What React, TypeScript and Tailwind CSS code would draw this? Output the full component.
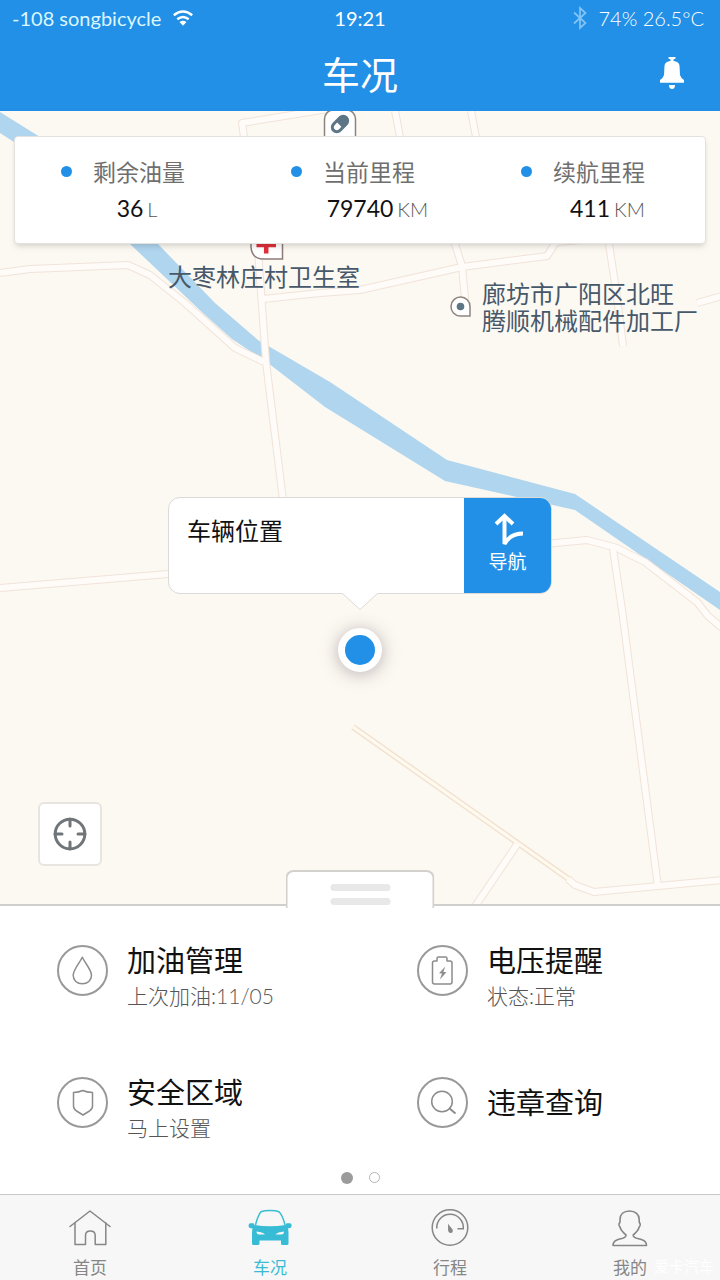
import React, { useState } from 'react';

const roads = [
    'M0 273 L30 269 L128 265 L150 275 L185 303 L235 348 L264 362',
    'M340 107 L242 123 L244 137 L258 250 L266 362 L283 500',
    'M263 299 L320 293 L360 290 L462 267 L547 256 L556 242 L610 238',
    'M395 111 L400 137 L455 244 L462 266 L466 310',
    'M471 111 L476 137 M609 244 L616 290 L623 346',
    'M697 303 L722 296',
    'M0 588 L180 573',
    'M545 544 L587 540 L617 548 L645 562 L697 602 L708 616 L722 628',
    'M518 843 L474 908',
    'M568 879 L575 885 L594 892 L722 880',
    'M613 549 L622 610 L658 887',
];

const stats = [
    { label: '剩余油量', value: '36', unit: 'L' },
    { label: '当前里程', value: '79740', unit: 'KM' },
    { label: '续航里程', value: '411', unit: 'KM' },
];

const DropIcon = () => (
    <svg className="h-full w-full" viewBox="2 2 47 47" fill="none" stroke="#8c8c8c" strokeWidth="1.5" strokeLinejoin="round">
        <path d="M25.3 12.3 C28 18 34.5 25 34.5 30.2 C34.5 35.5 30.5 38.8 25.3 38.8 C20.1 38.8 16.2 35.5 16.2 30.2 C16.2 25 22.6 18 25.3 12.3 Z" />
    </svg>
);

const BatteryIcon = () => (
    <svg className="h-full w-full" viewBox="2 2 47 47" fill="none" stroke="#8c8c8c" strokeWidth="1.5" strokeLinejoin="round">
        <path d="M20 16 V13.5 Q20 12 21.5 12 H28.5 Q30 12 30 13.5 V16 H33 Q35 16 35 18 V37 Q35 39 33 39 H17.5 Q15.5 39 15.5 37 V18 Q15.5 16 17.5 16 Z" />
        <path d="M28.3 21.5 L22 28.2 L25 28.5 L22.8 34.5 L29.5 27.3 L26.3 27 Z" fill="#8c8c8c" stroke="none" />
    </svg>
);

const ShieldIcon = () => (
    <svg className="h-full w-full" viewBox="2 2 47 47" fill="none" stroke="#8c8c8c" strokeWidth="1.5" strokeLinejoin="round">
        <path d="M16.5 15.5 Q22 15.3 25.8 13.5 Q29.5 15.3 35.5 15.5 V29 Q35.5 32 32.5 34 L26 38 L19.5 34 Q16.5 32 16.5 29 Z" />
    </svg>
);

const SearchIcon = () => (
    <svg className="h-full w-full" viewBox="2 2 47 47" fill="none" stroke="#8c8c8c" strokeWidth="1.5">
        <circle cx="25" cy="24.5" r="10.3" />
        <path d="M32 31 L38.5 36.5" strokeWidth="2" />
    </svg>
);

const features = [
    { title: '加油管理', sub: '上次加油:11/05', Icon: DropIcon },
    { title: '电压提醒', sub: '状态:正常', Icon: BatteryIcon },
    { title: '安全区域', sub: '马上设置', Icon: ShieldIcon },
    { title: '违章查询', sub: '', Icon: SearchIcon },
];

const HomeIcon = () => (
    <svg className="h-11 w-11" viewBox="0 0 44 44" fill="none" stroke="currentColor" strokeWidth="1.5" strokeLinejoin="round" strokeLinecap="round">
        <path d="M2 21.5 L22 6 L42 21.5" />
        <path d="M7 18 V39.5 H17.5 V30.5 Q17.5 26 22.3 26 Q27.2 26 27.2 30.5 V39.5 H37.8 V18" />
    </svg>
);

const CarIcon = () => (
    <svg className="h-11 w-11" viewBox="0 0 44 44" fill="none">
        <path d="M7.5 20 C9 14 11 9 13 6.8 C17 5.2 27 5.2 31 6.8 C33.5 9 35.5 14 37 20" stroke="currentColor" strokeWidth="1.5" />
        <path
            fillRule="evenodd"
            fill="currentColor"
            d="M6.5 20 Q22 22.5 37.5 20 L38.5 18.3 H42 Q44 18.5 43.5 21.5 Q43.4 23.2 41 23.2 H40 Q40.5 25 40.5 28 V38.5 Q40.5 40 39 40 H34.5 Q33 40 33 38.5 V35.500 H11.5 V38.5 Q11.5 40 10 40 H5.5 Q4 40 4 38.5 V28 Q4 25 4.5 23.2 H3 Q.8 23.2 .6 21.5 Q.4 18.5 2 18.3 H5.5 Z M8.500 26.500 Q8.5 29.500 11 29.500 L17 29.500 Q15 27 8.500 26.500 Z M36 26.500 Q29.5 27 27.500 29.500 L33.5 29.500 Q36 29.500 36 26.500 Z"
        />
    </svg>
);

const GaugeIcon = () => (
    <svg className="h-11 w-11" viewBox="0 0 44 44" fill="none" stroke="currentColor" strokeWidth="1.5">
        <circle cx="22" cy="22.5" r="17.8" />
        <path d="M8.8 23.5 A13.3 13.3 0 1 1 35.3 23.8 H29.5" />
        <path d="M20 18.8 L24.5 24.5 Q25.5 27.8 22.8 28 Q20.3 28 20.1 25 Z" fill="currentColor" stroke="none" />
    </svg>
);

const UserIcon = () => (
    <svg className="h-11 w-11" viewBox="0 0 44 44" fill="none" stroke="currentColor" strokeWidth="1.6" strokeLinejoin="round">
        <path d="M21.5 6 C15.5 6 12 9.5 12 14.5 V17 Q10 19.5 12 22 Q12.6 24.5 14.5 26.5 Q16.2 28.6 18 30 C18.2 33.5 13.5 33.3 9.5 34.8 Q5 36.5 5 40.5 H38.5 Q38.500 36.5 34 34.8 C30 33.3 25 33.5 25.2 30 Q27 28.6 28.7 26.5 Q30.6 24.5 31.2 22 Q33.2 19.5 31.2 17 V14.5 C31.2 9.5 27.5 6 21.5 6 Z" />
    </svg>
);

const tabs = [
    { name: '首页', Icon: HomeIcon },
    { name: '车况', Icon: CarIcon },
    { name: '行程', Icon: GaugeIcon },
    { name: '我的', Icon: UserIcon },
];

const MapCanvas = () => (
    <svg className="absolute inset-0 h-full w-full" viewBox="0 111 720 795" preserveAspectRatio="xMidYMin slice" fill="none">
        <path
            fill="#b0d5ee"
            d="M0 112 L40 137 L158 244 L215 303 L258 340 L330 382 L447 460 L575 494 L720 592 V610 L575 510 L445 481 L325 407 L268 363 L232 339 L205 315 L130 244 L14 142 L0 133 Z"
        />
        {roads.map((d) => <path key={d} d={d} stroke="#f1e3d9" strokeWidth="8" strokeLinejoin="round" />)}
        <path d="M353 727 L570 880" stroke="#f3e2d0" strokeWidth="6" />
        {roads.map((d) => <path key={d} d={d} stroke="#fefbf8" strokeWidth="6" strokeLinejoin="round" />)}
        <path d="M353 727 L570 880" stroke="#fffaf0" strokeWidth="3" />

        {/* pharmacy */}
        <rect x="324.5" y="110" width="31" height="40" rx="9" fill="#fff" stroke="#8d8480" strokeWidth="1.5" />
        <g transform="rotate(-45 340 124)">
            <rect x="329.5" y="118" width="21" height="12" rx="6" fill="#5d7686" />
            <path d="M339 121 H336 Q332.5 121 332.5 124 Q332.5 127 336 127 H339 Z" fill="#fff" />
        </g>

        {/* clinic */}
        <path d="M251 240 V247 Q252 259 263 259 H282.5 V240 Z" fill="#fff" stroke="#8d7a7a" strokeWidth="1.5" />
        <path d="M256.5 245 H276 M266.2 240 V253.5" stroke="#e0303a" strokeWidth="4.5" />

        {/* factory */}
        <path d="M470 316 H460 A9.5 9.5 0 1 1 470 306.5 Z" fill="#fff" stroke="#8d8480" strokeWidth="1.5" />
        <circle cx="460.5" cy="306.5" r="3.8" fill="#5d7686" />
    </svg>
);

const App: React.FC = () => {
    const [active, setActive] = useState('车况');

    return (
        <div className="flex min-h-screen flex-col bg-white font-['Lato','Noto_Sans_CJK_SC',sans-serif] text-[#111]">
            <header className="bg-[#2190e6] text-white">
                <div className="grid h-9 grid-cols-3 items-center px-3 text-[20px] leading-6">
                    <div className="flex items-center gap-3 whitespace-nowrap text-[#dcf6ff]">
                        <span>-108 songbicycle</span>
                        <svg className="h-4 w-5" viewBox="0 0 20 16" fill="none" stroke="#fff" strokeWidth="2.4">
                            <path d="M.8 5.3 Q10 -2.3 19.2 5.3" />
                            <path d="M4.3 9.3 Q10 4.6 15.7 9.3" />
                            <path d="M6.5 12 Q10 9.3 13.5 12 L10 15.8 Z" fill="#fff" stroke="none" />
                        </svg>
                    </div>
                    <div className="text-center">19:21</div>
                    <div className="flex items-center justify-end gap-3 whitespace-nowrap pr-1">
                        <svg className="h-6 w-3.5" viewBox="0 0 14 24" fill="none" stroke="#83c4f5" strokeWidth="1.7">
                            <path d="M1 6.5 L12.5 17 L7 22 V2 L12.5 7 L1 17.5" />
                        </svg>
                        <span className="font-light">74% 26.5°C</span>
                    </div>
                </div>
                <div className="grid h-[75px] grid-cols-[1fr_auto_1fr] items-start px-[35px] pt-3.5">
                    <h1 className="col-start-2 text-[38px] leading-[48px]">车况</h1>
                    <button type="button" aria-label="通知" className="mt-[7px] justify-self-end">
                        <svg className="h-8 w-[26px]" viewBox="0 0 26 32" fill="#fff">
                            <path d="M9.5 0 H16.5 V1.5 L14.5 2.5 V4 Q20 4.800 20.500 8.500 L21 18 Q21.5 20.500 25 23 V25.800 H1 V23 Q4.500 20.500 5 18 L5.500 8.500 Q6 4.800 11.500 4 V2.500 L9.500 1.500 Z" />
                            <path d="M10 28 H16 Q16 32 13 32 Q10 32 10 28 Z" />
                        </svg>
                    </button>
                </div>
            </header>

            <main className="flex flex-1 flex-col">
                <section className="relative min-h-[640px] flex-1 overflow-hidden bg-[#fcf9f2]">
                    <MapCanvas />
                    <span className="absolute left-[168px] top-[150px] text-[24px] leading-8 text-[#46586a]">大枣林庄村卫生室</span>
                    <span className="absolute left-[482px] top-[169px] whitespace-nowrap text-[24px] leading-[27px] text-[#46586a]">
                        廊坊市广阳区北旺<br />腾顺机械配件加工厂
                    </span>

                    <div className="relative mx-3.5 mt-[25px] grid h-[108px] grid-cols-3 rounded-sm border border-[#e4e2de] bg-white shadow-md">
                        {stats.map((s) => (
                            <div key={s.label} className="flex flex-col justify-center">
                                <div className="flex items-center justify-center gap-[21px] pr-3.5 text-[23px] leading-9 text-[#6f6f6f]">
                                    <i className="h-[11px] w-[11px] rounded-full bg-[#2190e6]" />
                                    <span>{s.label}</span>
                                </div>
                                <div className="grid grid-cols-[1fr_auto_1fr] items-baseline gap-1 text-[23px] leading-9">
                                    <span className="col-start-2">{s.value}</span>
                                    <span className="text-[20px] font-light text-[#555]">{s.unit}</span>
                                </div>
                            </div>
                        ))}
                    </div>

                    <div className="absolute left-1/2 top-[386px] flex -translate-x-1/2 flex-col items-center">
                        <div className="flex h-[97px] w-96 overflow-hidden rounded-xl border border-[#dcdad8] bg-white">
                            <p className="flex-1 px-[18px] pt-[15px] text-[24px] leading-9">车辆位置</p>
                            <button type="button" className="flex w-[87px] flex-col items-center justify-center bg-[#2190e6] pb-1 text-[19px] leading-7 text-white">
                                <svg className="h-9 w-9" viewBox="0 0 36 36" fill="none" stroke="#fff" strokeWidth="4">
                                    <path d="M6 12 L14.5 4 L23 12" />
                                    <path d="M14.5 4 V32 Q20 21.5 33 21.5" />
                                </svg>
                                <span>导航</span>
                            </button>
                        </div>
                        <svg className="-mt-px h-[18px] w-9" viewBox="0 0 36 18">
                            <path d="M0 0 L18 16.5 L36 0" fill="#fff" stroke="#dcdad8" />
                        </svg>
                        <div className="mt-[17px] h-11 w-11 rounded-full border-[7px] border-white bg-[#2190e6] shadow-[0_2px_18px_rgba(60,40,60,0.35)]" />
                    </div>

                    <button type="button" aria-label="定位" className="absolute bottom-[38px] left-[38px] flex h-16 w-16 items-center justify-center rounded-md border-2 border-[#e8e5e0] bg-white">
                        <svg className="h-9 w-9" viewBox="0 0 36 36" fill="none" stroke="#70757a" strokeWidth="3">
                            <circle cx="18" cy="18" r="14.8" />
                            <path d="M18 3 V10 M18 26 V33 M3 18 H10 M26 18 H33" strokeLinecap="round" />
                        </svg>
                    </button>
                </section>

                <section className="relative border-t-2 border-[#cfcfcd] bg-white">
                    <button type="button" aria-label="展开" className="absolute bottom-full left-1/2 -mb-0.5 flex h-[38px] w-[149px] -translate-x-1/2 flex-col items-center gap-[7px] rounded-t-lg border-2 border-b-0 border-[#d3d1ce] bg-white pt-3">
                        <i className="h-[7px] w-[60px] rounded-sm bg-[#e8e8e8]" />
                        <i className="h-[7px] w-[60px] rounded-sm bg-[#e8e8e8]" />
                    </button>
                    <div className="grid grid-cols-2">
                        {features.map(({ title, sub, Icon }) => (
                            <button type="button" key={title} className="flex h-[132px] items-center gap-[19px] pb-[3px] pl-[57px] text-left">
                                <span className="h-[51px] w-[51px] rounded-full border-2 border-[#999]">
                                    <Icon />
                                </span>
                                <span className="flex flex-col">
                                    <span className="text-[29px] leading-[50px]">{title}</span>
                                    {sub && <span className="text-[21px] font-light leading-5 text-[#555]">{sub}</span>}
                                </span>
                            </button>
                        ))}
                    </div>
                    <div className="flex h-6 items-start justify-center gap-4">
                        <i className="mt-0.5 h-3 w-3 rounded-full bg-[#9b9b9b]" />
                        <i className="mt-0.5 h-[11px] w-[11px] rounded-full border border-[#b5b5b5]" />
                    </div>
                </section>
            </main>

            <nav className="relative grid h-[86px] grid-cols-4 border-t border-[#c9c9c9] bg-[#f7f7f7]">
                {tabs.map(({ name, Icon }) => (
                    <button
                        key={name}
                        type="button"
                        onClick={() => setActive(name)}
                        className={`flex flex-col items-center gap-[7px] pt-2.5 text-[17px] leading-6 ${active === name ? 'text-[#38bcd5]' : 'text-[#868686]'}`}
                    >
                        <Icon />
                        <span>{name}</span>
                    </button>
                ))}
                <span className="absolute bottom-0.5 right-1.5 text-[15px] leading-6 text-white">爱卡汽车</span>
            </nav>
        </div>
    );
};

export default App;
